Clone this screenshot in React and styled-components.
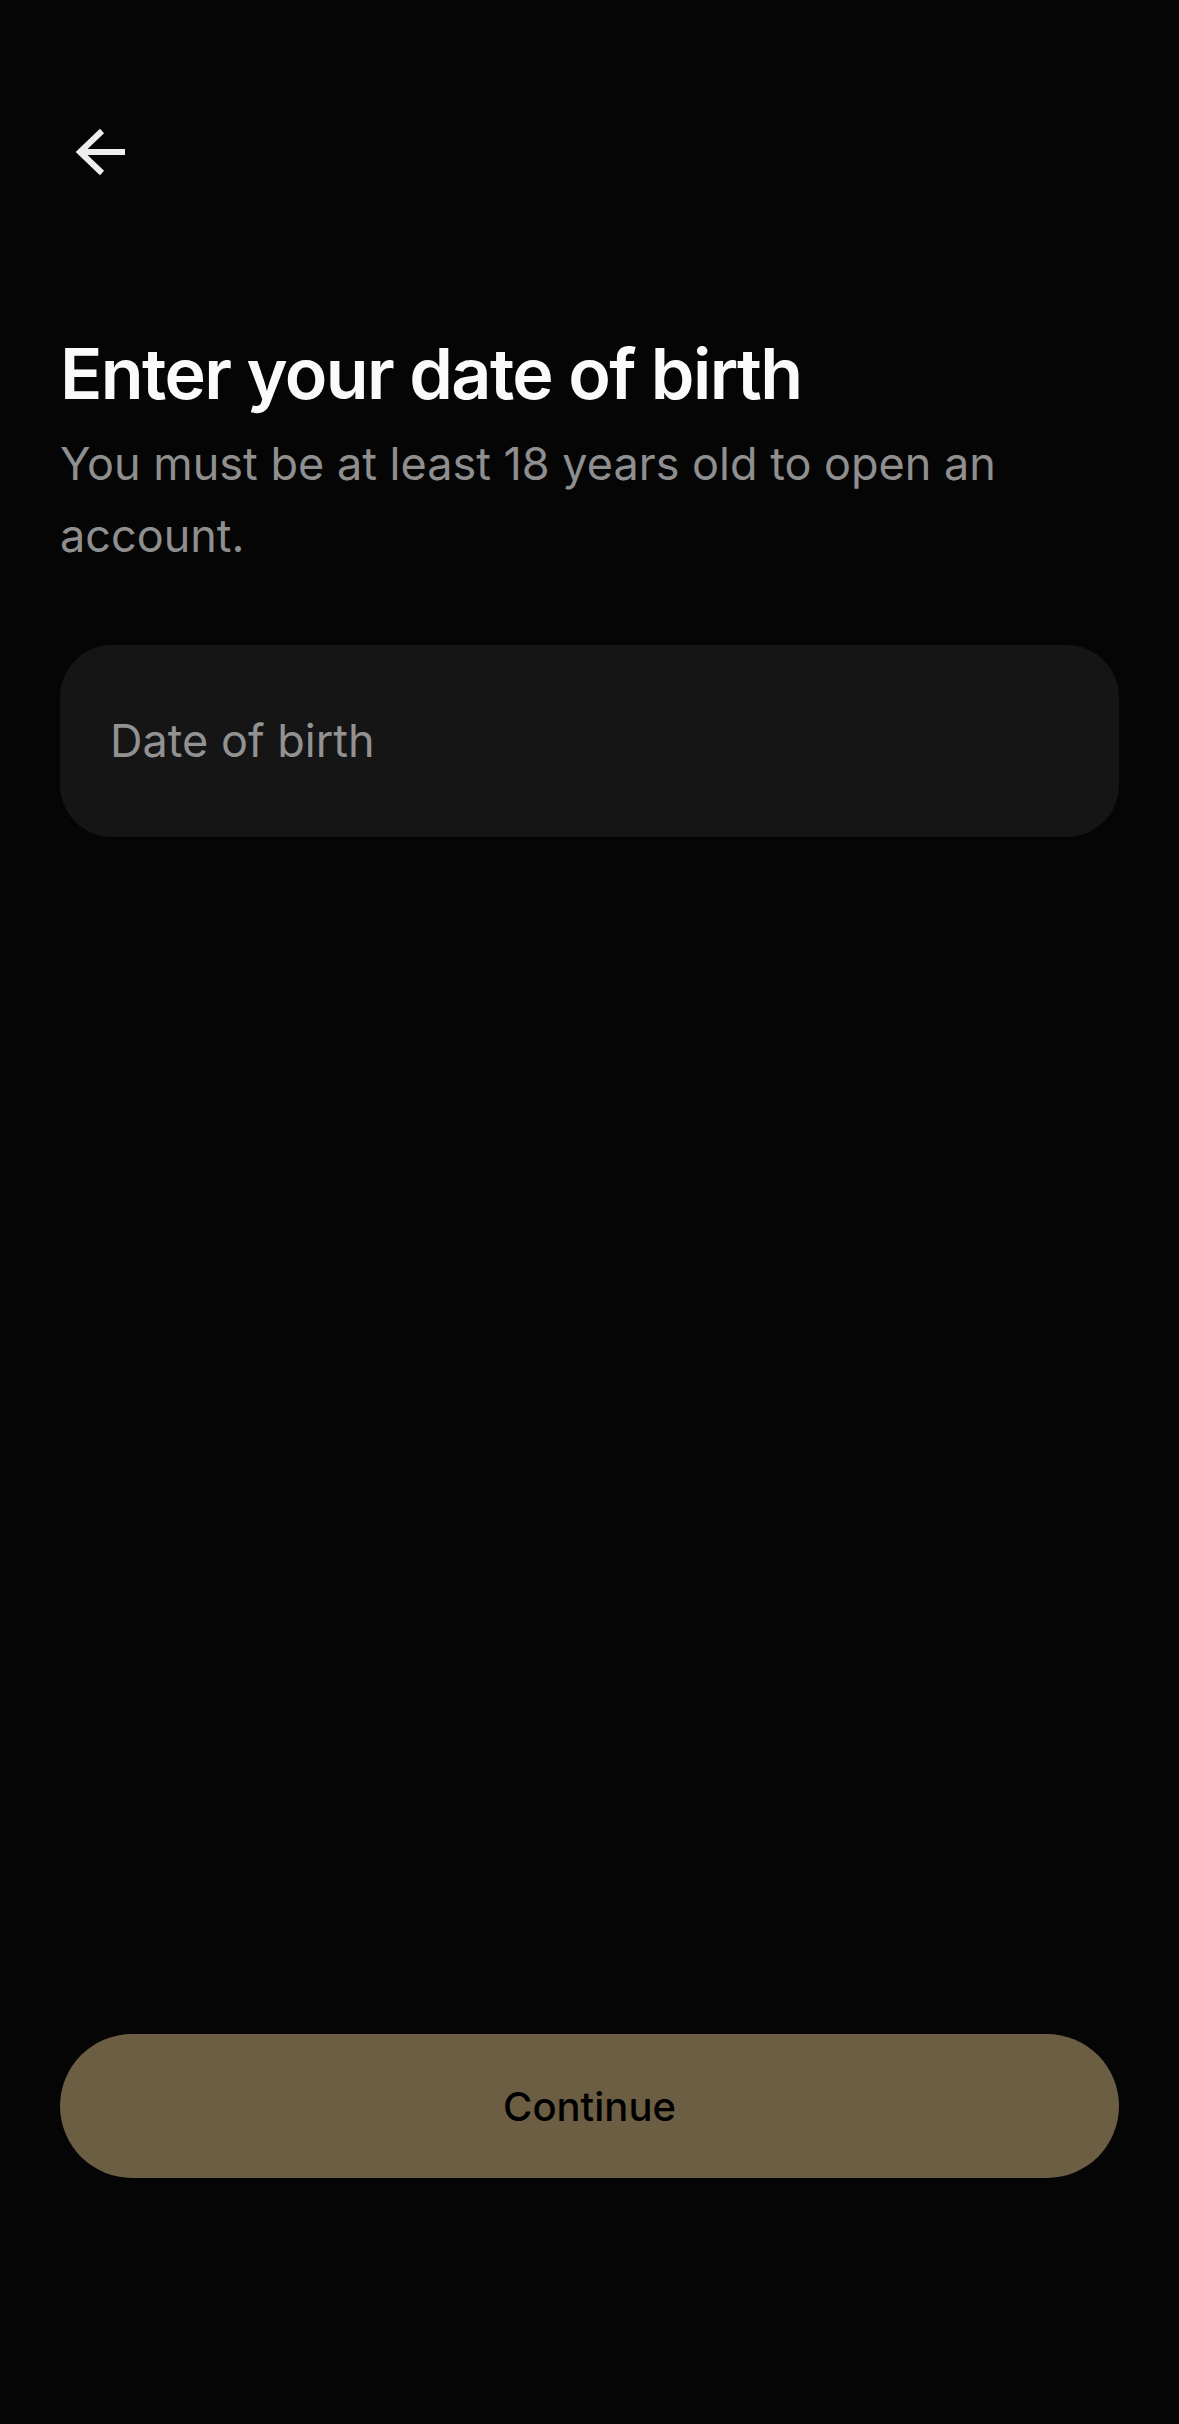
import React from 'react';
import styled, {createGlobalStyle} from 'styled-components';

const GlobalStyle = createGlobalStyle`
  html, body {
    margin: 0;
    padding: 0;
    background: #050505;
  }
  body {
    font-family: Inter, "Noto Sans", "Liberation Sans", sans-serif;
    -webkit-font-smoothing: antialiased;
  }
`

const BackArrow = () => (
  <svg width="52" height="48" viewBox="0 0 52 48" fill="none">
    <path d="M5 24 H50" stroke="#eeeeee" strokeWidth="6"/>
    <path d="M27 3 L5 24 L27 45" stroke="#eeeeee" strokeWidth="6" strokeLinejoin="miter"/>
  </svg>
)

const App = () => {
  const [dob, setDob] = React.useState('')

  return (
    <>
      <GlobalStyle/>
      <Page>
        <Header>
          <BackButton aria-label="Back">
            <BackArrow/>
          </BackButton>
        </Header>
        <Title>Enter your date of birth</Title>
        <Subtitle>You must be at least 18 years old to open an account.</Subtitle>
        <Field>
          <FieldInput
            placeholder="Date of birth"
            value={dob}
            onChange={e => setDob(e.target.value)}
          />
        </Field>
        <Footer>
          <ContinueButton disabled={!dob}>Continue</ContinueButton>
        </Footer>
      </Page>
    </>
  );
};

const Page = styled.div`
  min-height: 2424px;
  box-sizing: border-box;
  display: flex;
  flex-direction: column;
  padding: 0 60px;
  background: #050505;
`

const Header = styled.header`
  display: flex;
  align-items: center;
  padding-top: 128px;
  height: 48px;
`

const BackButton = styled.button`
  display: flex;
  padding: 0;
  margin-left: 15px;
  border: none;
  background: none;
  cursor: pointer;
`

const Title = styled.h1`
  margin: 156px 0 0;
  font-size: 70px;
  line-height: 84px;
  font-weight: 600;
  letter-spacing: -1.6px;
  color: #fafafa;
`

const Subtitle = styled.p`
  margin: 12px 0 0;
  font-size: 45px;
  line-height: 72px;
  font-weight: 400;
  color: #8f8f8f;
  padding-right: 100px;
`

const Field = styled.label`
  display: flex;
  align-items: center;
  height: 192px;
  margin-top: 73px;
  padding: 0 50px;
  border-radius: 52px;
  background: #151515;
`

const FieldInput = styled.input`
  flex: 1;
  border: none;
  outline: none;
  background: transparent;
  padding: 0;
  margin-top: -2px;
  font-family: inherit;
  font-size: 45px;
  color: #fafafa;

  &::placeholder {
    color: #929292;
  }
`

const Footer = styled.div`
  margin-top: auto;
  padding-bottom: 246px;
`

const ContinueButton = styled.button`
  width: 100%;
  height: 144px;
  border: none;
  border-radius: 72px;
  background: #6c5e42;
  font-family: inherit;
  font-size: 40px;
  font-weight: 500;
  color: #000;
  cursor: pointer;
`

export default App;
